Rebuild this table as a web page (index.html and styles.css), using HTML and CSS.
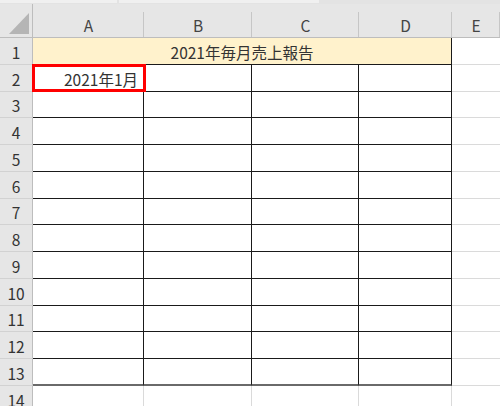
FILE: index.html
```html
<!DOCTYPE html>
<html lang="ja">
<head>
<meta charset="utf-8">
<link rel="stylesheet" href="styles.css">
</head>
<body>
<div class="sheet">
  <div class="topbar"><span class="seg seg1"></span><span class="seg seg2"></span></div>
  <div class="grid">
    <div class="corner"><span class="tri"></span></div>
    <div class="ch">A</div>
    <div class="ch">B</div>
    <div class="ch">C</div>
    <div class="ch">D</div>
    <div class="ch">E</div>

    <div class="rh">1</div>
    <div class="c title">2021年毎月売上報告</div>
    <div class="c e"></div>

    <div class="rh">2</div>
    <div class="c d sel-cell">2021年1月<span class="sel"></span></div>
    <div class="c d"></div><div class="c d"></div><div class="c d"></div><div class="c e"></div>

    <div class="rh">3</div>
    <div class="c d"></div><div class="c d"></div><div class="c d"></div><div class="c d"></div><div class="c e"></div>
    <div class="rh">4</div>
    <div class="c d"></div><div class="c d"></div><div class="c d"></div><div class="c d"></div><div class="c e"></div>
    <div class="rh">5</div>
    <div class="c d"></div><div class="c d"></div><div class="c d"></div><div class="c d"></div><div class="c e"></div>
    <div class="rh">6</div>
    <div class="c d"></div><div class="c d"></div><div class="c d"></div><div class="c d"></div><div class="c e"></div>
    <div class="rh">7</div>
    <div class="c d"></div><div class="c d"></div><div class="c d"></div><div class="c d"></div><div class="c e"></div>
    <div class="rh">8</div>
    <div class="c d"></div><div class="c d"></div><div class="c d"></div><div class="c d"></div><div class="c e"></div>
    <div class="rh">9</div>
    <div class="c d"></div><div class="c d"></div><div class="c d"></div><div class="c d"></div><div class="c e"></div>
    <div class="rh">10</div>
    <div class="c d"></div><div class="c d"></div><div class="c d"></div><div class="c d"></div><div class="c e"></div>
    <div class="rh">11</div>
    <div class="c d"></div><div class="c d"></div><div class="c d"></div><div class="c d"></div><div class="c e"></div>
    <div class="rh">12</div>
    <div class="c d"></div><div class="c d"></div><div class="c d"></div><div class="c d"></div><div class="c e"></div>
    <div class="rh">13</div>
    <div class="c d last"></div><div class="c d last"></div><div class="c d last"></div><div class="c d last"></div><div class="c e"></div>
    <div class="rh">14</div>
    <div class="c g"></div><div class="c g"></div><div class="c g"></div><div class="c g"></div><div class="c e"></div>
  </div>
</div>
</body>
</html>
```
FILE: styles.css
```css
html, body {
  margin: 0;
  padding: 0;
  background: #ffffff;
  overflow: hidden;
}
.sheet {
  width: 500px;
  height: 406px;
  overflow: hidden;
  font-family: "Noto Sans CJK JP", "Noto Sans", sans-serif;
  color: #333333;
}
.topbar {
  height: 4px;
  display: flex;
  background: #e3e3e3;
}
.seg { height: 3px; background: #f0f0f0; }
.seg1 { width: 117px; }
.seg2 { width: 200px; margin-left: 2px; }

.grid {
  display: grid;
  grid-template-columns: 33px 111px 108px 107px 93px 1fr;
  grid-template-rows: 34px 27px 27px 26px 27px 27px 27px 26px 27px 27px 27px 26px 27px 27px 27px;
}
.corner {
  background: #e6e6e6;
  border-right: 1px solid #bdbdbd;
  border-bottom: 1px solid #bdbdbd;
  position: relative;
}
.tri {
  position: absolute;
  right: 3px;
  bottom: 3px;
  width: 0;
  height: 0;
  border-left: 20px solid transparent;
  border-bottom: 21px solid #b5b5b5;
}
.ch {
  background: #e6e6e6;
  border-bottom: 1px solid #bdbdbd;
  display: flex;
  align-items: center;
  justify-content: center;
  font-size: 15.5px;
  color: #444444;
  padding-top: 8px;
  box-sizing: border-box;
  background-image: linear-gradient(#c6c6c6, #c6c6c6);
  background-size: 1px 25px;
  background-position: right bottom;
  background-repeat: no-repeat;
}
.rh {
  background: #e6e6e6;
  border-right: 1px solid #bdbdbd;
  border-bottom: 1px solid #d2d2d2;
  display: flex;
  align-items: center;
  justify-content: center;
  font-size: 15.5px;
  color: #333333;
  box-sizing: border-box;
  padding-top: 1px;
}
.c {
  box-sizing: border-box;
  font-size: 15.5px;
}
.title {
  grid-column: 2 / 6;
  background: #fff2cc;
  border-right: 1px solid #1a1a1a;
  border-bottom: 1px solid #1a1a1a;
  display: flex;
  align-items: center;
  justify-content: center;
  padding-top: 1px;
}
.d {
  border-right: 1px solid #1a1a1a;
  border-bottom: 1px solid #1a1a1a;
}
.d.last {
  border-bottom: 2px solid #6a6a6a;
}
.g {
  border-right: 1px solid #dadada;
}
.e {
  border-bottom: 1px solid #dadada;
}
.sel-cell {
  position: relative;
  display: flex;
  align-items: center;
  justify-content: flex-end;
  padding-right: 5px;
  padding-top: 1px;
}
.sel {
  position: absolute;
  left: -1px;
  top: -1px;
  width: 114px;
  height: 28px;
  border: 3px solid #ff0000;
  box-sizing: border-box;
}
```
